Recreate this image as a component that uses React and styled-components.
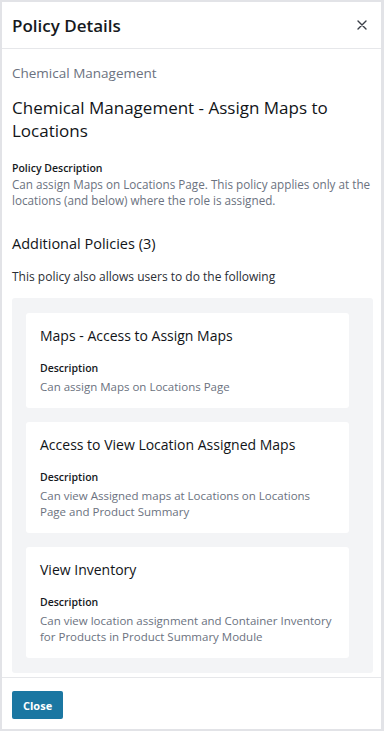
import React from "react";
import styled, { createGlobalStyle } from "styled-components";

const GlobalStyle = createGlobalStyle`
  html, body {
    margin: 0;
    padding: 0;
    background: #ffffff;
  }
  * {
    box-sizing: border-box;
  }
`;

const policies = [
  {
    title: "Maps - Access to Assign Maps",
    description: "Can assign Maps on Locations Page",
  },
  {
    title: "Access to View Location Assigned Maps",
    description:
      "Can view Assigned maps at Locations on Locations Page and Product Summary",
  },
  {
    title: "View Inventory",
    description:
      "Can view location assignment and Container Inventory for Products in Product Summary Module",
  },
];

const App = () => {
  return (
    <>
      <GlobalStyle />
      <Panel>
        <Header>
          <HeaderTitle>Policy Details</HeaderTitle>
          <CloseIcon aria-label="close">
            <svg width="10" height="10" viewBox="0 0 10 10">
              <path
                d="M1 1 L9 9 M9 1 L1 9"
                stroke="#3a3f47"
                strokeWidth="1.4"
                strokeLinecap="round"
              />
            </svg>
          </CloseIcon>
        </Header>
        <Body>
          <Category>Chemical Management</Category>
          <PolicyTitle>Chemical Management - Assign Maps to Locations</PolicyTitle>
          <Label>Policy Description</Label>
          <Text>
            Can assign Maps on Locations Page. This policy applies only at the
            locations (and below) where the role is assigned.
          </Text>
          <SectionTitle>Additional Policies (3)</SectionTitle>
          <Intro>This policy also allows users to do the following</Intro>
          <CardList>
            {policies.map((p) => (
              <Card key={p.title}>
                <CardTitle>{p.title}</CardTitle>
                <Label>Description</Label>
                <Text>{p.description}</Text>
              </Card>
            ))}
          </CardList>
        </Body>
        <Footer>
          <Button>Close</Button>
        </Footer>
      </Panel>
    </>
  );
};

const Panel = styled.div`
  height: 100vh;
  width: 100vw;
  display: flex;
  flex-direction: column;
  border: 2px solid #e2e3e7;
  border-right-width: 3px;
  font-family: "Open Sans", "Liberation Sans", sans-serif;
  color: #16191d;
  overflow: hidden;
`;

const Header = styled.div`
  height: 47px;
  flex-shrink: 0;
  display: flex;
  align-items: center;
  justify-content: space-between;
  padding: 0 14px 0 10px;
  border-bottom: 1px solid #e6e7ea;
`;

const HeaderTitle = styled.h2`
  margin: 0;
  font-size: 17px;
  font-weight: 600;
  color: #16191d;
`;

const CloseIcon = styled.span`
  display: flex;
  align-items: center;
`;

const Body = styled.div`
  flex: 1;
  overflow: hidden;
  padding: 14px 8px 0 10px;
`;

const Category = styled.div`
  font-size: 13.5px;
  line-height: 20px;
  color: #6b7280;
`;

const PolicyTitle = styled.h1`
  margin: 13px 0 0;
  font-size: 17px;
  line-height: 23px;
  font-weight: 500;
  color: #111418;
`;

const Label = styled.div`
  margin-top: 18px;
  font-size: 10.5px;
  line-height: 16px;
  font-weight: 600;
  color: #16191d;
`;

const Text = styled.p`
  margin: 1px 0 0;
  font-size: 11.7px;
  line-height: 15.5px;
  color: #6b7280;
`;

const SectionTitle = styled.h3`
  margin: 26px 0 0;
  font-size: 14.5px;
  line-height: 20px;
  font-weight: 500;
  color: #111418;
`;

const Intro = styled.div`
  margin-top: 14px;
  font-size: 12px;
  line-height: 18px;
  color: #2a2e35;
`;

const CardList = styled.div`
  margin-top: 12px;
  background: #f3f4f6;
  border-radius: 3px;
  padding: 15px 24px 15px 14px;
  display: flex;
  flex-direction: column;
  gap: 14px;
`;

const Card = styled.div`
  background: #ffffff;
  border-radius: 3px;
  padding: 13px 14px 12px 14px;

  ${Label} {
    margin-top: 14px;
  }
  ${Text} {
    margin-top: 3px;
    font-size: 11.5px;
    line-height: 16.5px;
  }
`;

const CardTitle = styled.div`
  font-size: 14px;
  line-height: 20px;
  font-weight: 500;
  color: #111418;
`;

const Footer = styled.div`
  flex-shrink: 0;
  border-top: 1px solid #e6e7ea;
  padding: 13px 10px 10px;
`;

const Button = styled.button`
  height: 28px;
  padding: 0 11px;
  border: none;
  border-radius: 2px;
  background: #1b77a2;
  color: #ffffff;
  font-family: "Open Sans", "Liberation Sans", sans-serif;
  font-size: 11px;
  font-weight: 700;
  cursor: pointer;
`;

export default App;
